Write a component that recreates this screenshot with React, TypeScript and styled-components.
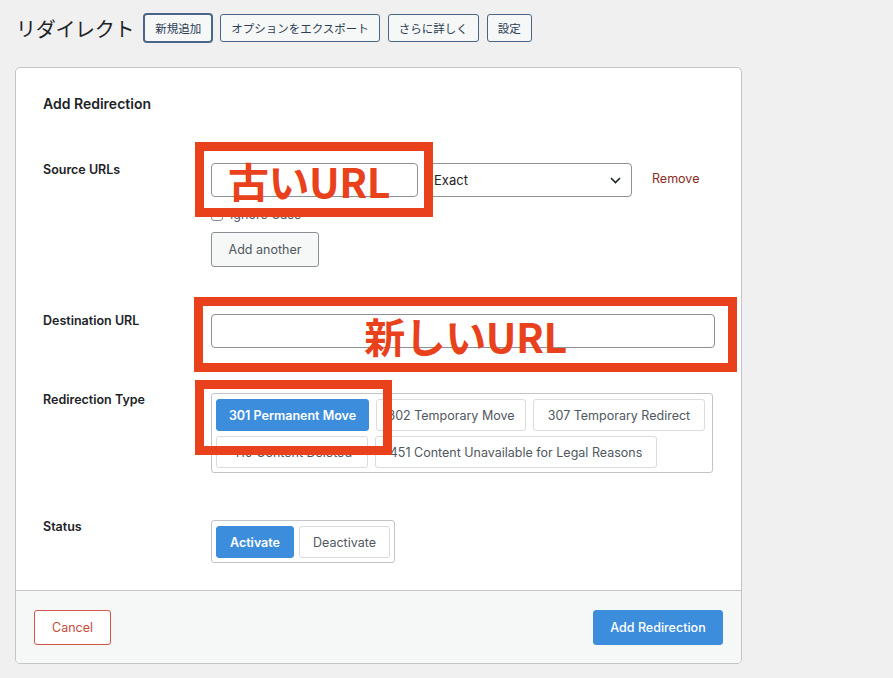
import React, { useState } from "react";
import styled, { createGlobalStyle, css } from "styled-components";

const GlobalStyle = createGlobalStyle`
  html, body {
    margin: 0;
    padding: 0;
    background: #f0f0f1;
    font-family: Inter, "Noto Sans CJK JP", sans-serif;
    color: #1d2327;
  }
  * { box-sizing: border-box; }
`;

const Page = styled.div`
  position: relative;
  width: 893px;
  height: 678px;
  overflow: hidden;
  padding: 14px 0 0 16px;
`;

const TitleBar = styled.div`
  display: flex;
  align-items: center;
  height: 28px;
`;

const PageTitle = styled.h1`
  margin: 0 10px 0 0;
  font-size: 20px;
  font-weight: 400;
  color: #1d2327;
  font-family: "Noto Sans CJK JP", sans-serif;
  letter-spacing: -0.3px;
`;

const TitleAction = styled.button<{ $focused?: boolean }>`
  height: 28px;
  padding: 0 10px;
  margin-right: 8px;
  border: 1px solid #4a6587;
  border-radius: 3px;
  background: #f6f7f7;
  color: #2c3e55;
  font-family: "Noto Sans CJK JP", sans-serif;
  font-size: 11.5px;
  ${(p) =>
    p.$focused &&
    css`
      box-shadow: 0 0 0 1px #4a6587;
    `}
`;

const Card = styled.div`
  margin: 25px 0 0 -1px;
  width: 727px;
  height: 597px;
  background: #fff;
  border: 1px solid #c3c4c7;
  border-radius: 5px;
  display: flex;
  flex-direction: column;
  overflow: hidden;
`;

const CardBody = styled.div`
  flex: 1;
  padding: 27px 27px 0 27px;
`;

const CardTitle = styled.h2`
  margin: 0 0 50px 0;
  font-size: 14px;
  font-weight: 600;
  line-height: 18px;
`;

const Row = styled.div<{ $gap: number }>`
  display: grid;
  grid-template-columns: 168px 1fr;
  margin-bottom: ${(p) => p.$gap}px;
`;

const Label = styled.div`
  font-size: 12.5px;
  font-weight: 600;
  line-height: 14px;
`;

const Field = styled.div`
  display: flex;
  flex-direction: column;
  align-items: flex-start;
`;

const Inline = styled.div`
  display: flex;
  align-items: center;
`;

const TextInput = styled.input<{ $width: number }>`
  width: ${(p) => p.$width}px;
  height: 34px;
  border: 1px solid #8c8f94;
  border-radius: 4px;
  padding: 0 8px;
  font-size: 13px;
  font-family: inherit;
  background: #fff;
`;

const SelectBox = styled.div`
  margin-left: 8px;
  width: 206px;
  height: 34px;
  border: 1px solid #8c8f94;
  border-radius: 4px;
  display: flex;
  align-items: center;
  justify-content: space-between;
  padding: 0 10px 0 7px;
  font-size: 13px;
  color: #1d2327;
`;

const RemoveLink = styled.a`
  margin-left: 20px;
  margin-top: -3px;
  font-size: 12.5px;
  color: #8a2b22;
  text-decoration: none;
`;

const CheckRow = styled.label`
  display: flex;
  align-items: center;
  height: 14px;
  margin-top: 11px;
  font-size: 12.5px;
  line-height: 14px;
  color: #50575e;
  gap: 7px;
`;

const CheckBox = styled.span`
  width: 12px;
  height: 12px;
  border: 1px solid #8c8f94;
  border-radius: 3px;
  background: #fff;
`;

const SecondaryButton = styled.button`
  margin-top: 10px;
  height: 35px;
  width: 108px;
  border: 1px solid #8c8f94;
  border-radius: 3px;
  background: #f6f7f7;
  color: #50575e;
  font-size: 12.5px;
  font-family: inherit;
`;

const ButtonGroup = styled.div<{ $width: number; $gap: number }>`
  width: ${(p) => p.$width}px;
  display: flex;
  flex-wrap: wrap;
  column-gap: ${(p) => p.$gap}px;
  row-gap: 5px;
  padding: 5px 4px 4px;
  border: 1px solid #c3c4c7;
  border-radius: 3px;
`;

const Choice = styled.button<{ $active?: boolean; $width: number }>`
  width: ${(p) => p.$width}px;
  height: 32px;
  padding: 0;
  border-radius: 3px;
  font-family: inherit;
  font-size: 12.5px;
  white-space: nowrap;
  ${(p) =>
    p.$active
      ? css`
          background: #3d8ddd;
          border: 1px solid #3d8ddd;
          color: #fff;
          font-weight: 600;
        `
      : css`
          background: #fff;
          border: 1px solid #dcdcde;
          color: #50575e;
          font-weight: 400;
        `}
`;

const Footer = styled.div`
  height: 73px;
  flex: none;
  background: #f6f7f7;
  border-top: 1px solid #c3c4c7;
  display: flex;
  align-items: center;
  justify-content: space-between;
  padding: 0 18px;
`;

const CancelButton = styled.button`
  height: 35px;
  width: 77px;
  background: #fff;
  border: 1px solid #d1564a;
  border-radius: 3px;
  color: #c84c3e;
  font-size: 12.5px;
  font-family: inherit;
`;

const PrimaryButton = styled.button`
  height: 35px;
  width: 130px;
  background: #3d8ddd;
  border: 1px solid #3d8ddd;
  border-radius: 3px;
  color: #fff;
  font-size: 12.5px;
  font-weight: 500;
  font-family: inherit;
`;

const Annotation = styled.div<{ $x: number; $y: number; $w: number; $h: number }>`
  position: absolute;
  left: ${(p) => p.$x}px;
  top: ${(p) => p.$y}px;
  width: ${(p) => p.$w}px;
  height: ${(p) => p.$h}px;
  border: 9px solid #e8411b;
  display: flex;
  align-items: center;
  justify-content: center;
  pointer-events: none;
`;

const AnnotationText = styled.span<{ $shift?: number }>`
  font-family: "Noto Sans CJK JP", sans-serif;
  font-weight: 700;
  font-size: 41px;
  line-height: 1;
  color: #e8411b;
  letter-spacing: -0.5px;
  white-space: nowrap;
  margin-left: ${(p) => p.$shift || 0}px;
  margin-top: 1px;
`;

const redirectTypes = [
  { label: "301 Permanent Move", width: 153 },
  { label: "302 Temporary Move", width: 150 },
  { label: "307 Temporary Redirect", width: 172 },
  { label: "410 Content Deleted", width: 152 },
  { label: "451 Content Unavailable for Legal Reasons", width: 282 },
];

function Chevron() {
  return (
    <svg width="11" height="7" viewBox="0 0 11 7" fill="none">
      <path d="M1 1l4.5 4.5L10 1" stroke="#1d2327" strokeWidth="1.6" />
    </svg>
  );
}

export default function App() {
  const [type, setType] = useState(0);
  const [active, setActive] = useState(true);

  return (
    <Page>
      <GlobalStyle />
      <TitleBar>
        <PageTitle>リダイレクト</PageTitle>
        <TitleAction $focused>新規追加</TitleAction>
        <TitleAction>オプションをエクスポート</TitleAction>
        <TitleAction>さらに詳しく</TitleAction>
        <TitleAction>設定</TitleAction>
      </TitleBar>

      <Card>
        <CardBody>
          <CardTitle>Add Redirection</CardTitle>

          <Row $gap={47}>
            <Label>Source URLs</Label>
            <Field>
              <Inline>
                <TextInput $width={207} />
                <SelectBox>
                  <span>Exact</span>
                  <Chevron />
                </SelectBox>
                <RemoveLink href="#">Remove</RemoveLink>
              </Inline>
              <CheckRow>
                <CheckBox />
                Ignore Case
              </CheckRow>
              <SecondaryButton>Add another</SecondaryButton>
            </Field>
          </Row>

          <Row $gap={45}>
            <Label>Destination URL</Label>
            <Field>
              <TextInput $width={504} />
            </Field>
          </Row>

          <Row $gap={47}>
            <Label>Redirection Type</Label>
            <Field>
              <ButtonGroup $width={502} $gap={7}>
                {redirectTypes.map((t, i) => (
                  <Choice
                    key={t.label}
                    $width={t.width}
                    $active={i === type}
                    onClick={() => setType(i)}
                  >
                    {t.label}
                  </Choice>
                ))}
              </ButtonGroup>
            </Field>
          </Row>

          <Row $gap={0}>
            <Label>Status</Label>
            <Field>
              <ButtonGroup $width={184} $gap={5}>
                <Choice $width={78} $active={active} onClick={() => setActive(true)}>
                  Activate
                </Choice>
                <Choice $width={91} $active={!active} onClick={() => setActive(false)}>
                  Deactivate
                </Choice>
              </ButtonGroup>
            </Field>
          </Row>
        </CardBody>

        <Footer>
          <CancelButton>Cancel</CancelButton>
          <PrimaryButton>Add Redirection</PrimaryButton>
        </Footer>
      </Card>

      <Annotation $x={195} $y={142} $w={238} $h={75}>
        <AnnotationText $shift={-10}>古いURL</AnnotationText>
      </Annotation>
      <Annotation $x={194} $y={297} $w={543} $h={75}>
        <AnnotationText>新しいURL</AnnotationText>
      </Annotation>
      <Annotation $x={195} $y={380} $w={197} $h={75} />
    </Page>
  );
}
